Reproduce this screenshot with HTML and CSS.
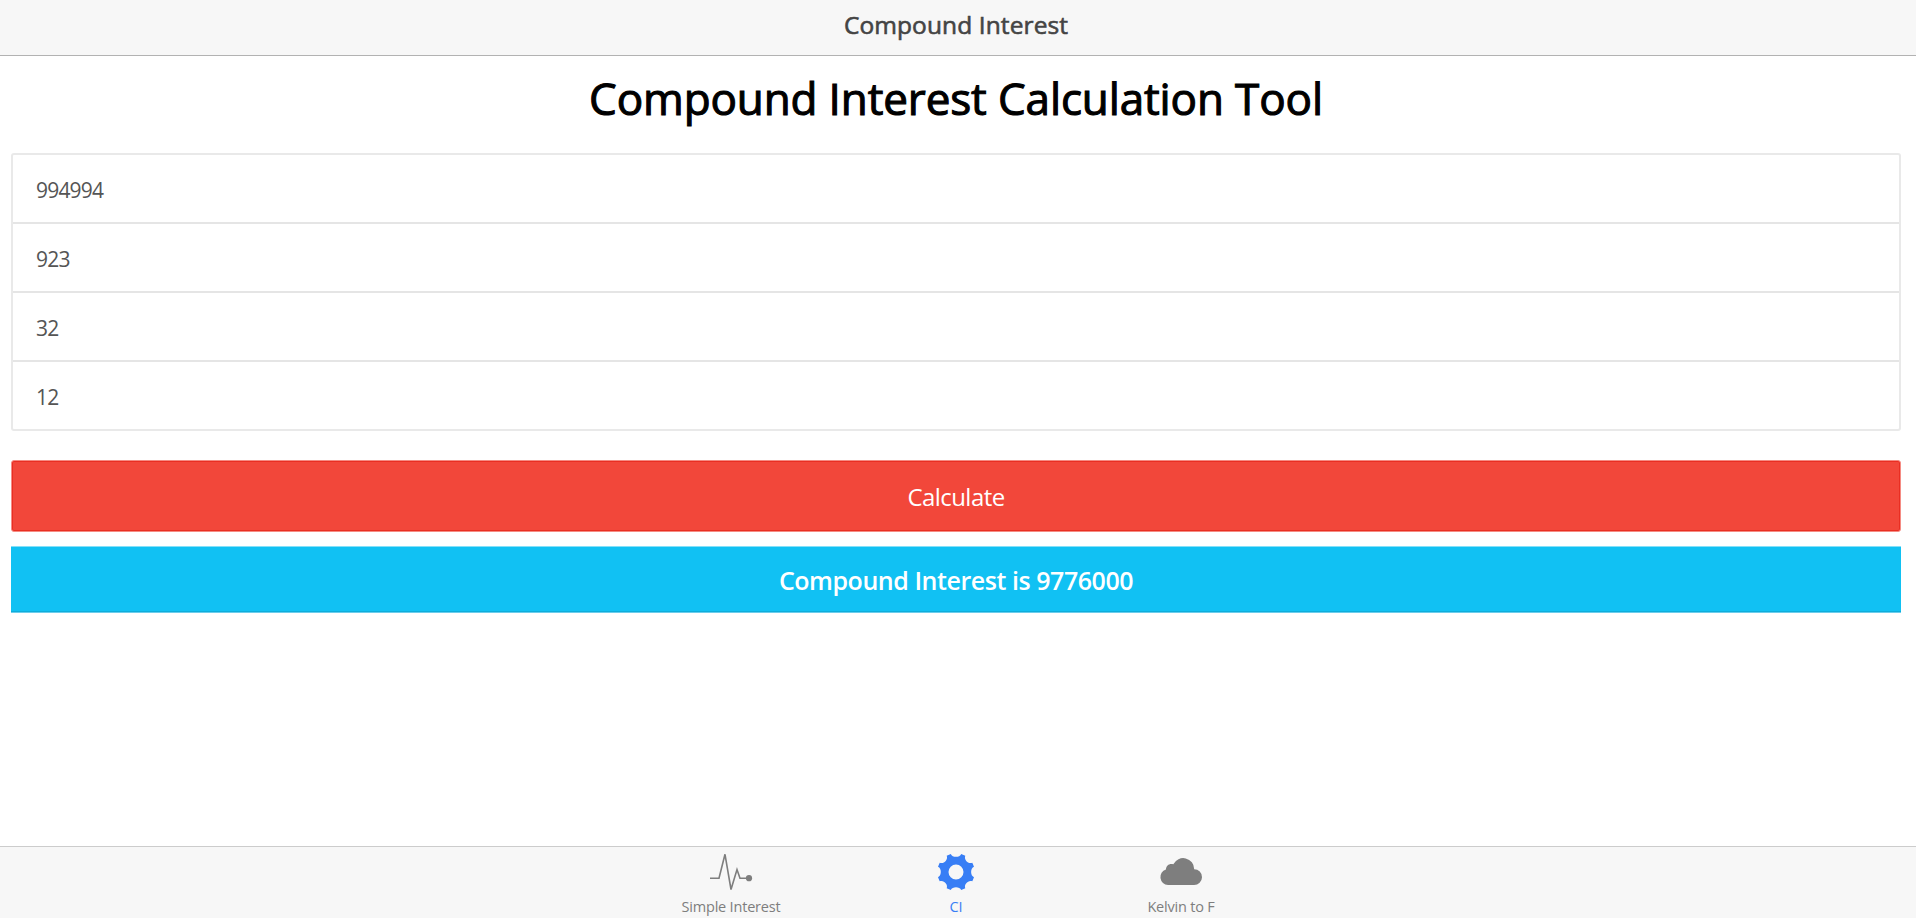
FILE: index.html
```html
<!DOCTYPE html>
<html lang="en">
<head>
<meta charset="utf-8">
<title>Compound Interest</title>
<link rel="stylesheet" href="styles.css">
</head>
<body>
<header class="bar"><span class="bar-title">Compound Interest</span></header>
<main class="content">
  <h1 class="heading">Compound Interest Calculation Tool</h1>
  <div class="list">
    <div class="item"><span>994994</span></div>
    <div class="item"><span>923</span></div>
    <div class="item"><span>32</span></div>
    <div class="item"><span>12</span></div>
  </div>
  <button class="button">Calculate</button>
  <div class="result">Compound Interest is 9776000</div>
</main>
<nav class="tabs">
  <a class="tab">
    <svg class="icon" viewBox="0 0 44 40"><path d="M1 25.2H10L16 1.3L22 36.5L28 16.5L31 25.2H40" fill="none" stroke="currentColor" stroke-width="1.6"/><circle cx="40" cy="25.2" r="3.1" fill="currentColor"/></svg>
    <span class="label">Simple Interest</span>
  </a>
  <a class="tab active">
    <svg class="icon" viewBox="-22 -19 44 40"><path fill="currentColor" fill-rule="evenodd" d="M-5.2-18C-3.9-14.2 3.9-14.2 5.2-18L9.3-16.3C7.6-12.4 12.4-7.6 16.3-9.3L18-5.2C14.2-3.8 14.2 3.8 18 5.2L16.3 9.3C12.4 7.6 7.6 12.4 9.3 16.3L5.2 18C3.8 14.2-3.8 14.2-5.2 18L-9.3 16.3C-7.6 12.4-12.4 7.6-16.3 9.3L-18 5.2C-14.2 3.8-14.2-3.8-18-5.2L-16.3-9.3C-12.4-7.6-7.6-12.4-9.3-16.3ZM0-7.5A7.5 7.5 0 1 0 0 7.5A7.5 7.5 0 1 0 0-7.5Z"/></svg>
    <span class="label">CI</span>
  </a>
  <a class="tab">
    <svg class="icon" viewBox="0 0 44 40"><path fill="currentColor" d="M9 32A8 8 0 0 1 6.9 16.4C7.2 12.4 10.4 10.2 14.3 11.3A11 11 0 0 1 35.2 16.2A7.9 7.9 0 0 1 35 32Z"/></svg>
    <span class="label">Kelvin to F</span>
  </a>
</nav>
</body>
</html>
```
FILE: styles.css
```css
* { box-sizing: border-box; }
body {
  margin: 0;
  height: 918px;
  overflow: hidden;
  display: flex;
  flex-direction: column;
  background: #fff;
  font-family: "Segoe UI", "Open Sans", "Noto Sans", sans-serif;
}
.bar {
  height: 56px;
  padding-right: 4px;
  background: #f7f7f7;
  border-bottom: 1px solid #b2b2b2;
  text-align: center;
  line-height: 49px;
  font-size: 24.5px;
  letter-spacing: 0.1px;
  -webkit-text-stroke: 0.6px #444;
  color: #444;
}
.content { flex: 1; padding: 0 15px 0 11px; }
.heading {
  margin: 0;
  height: 97px;
  line-height: 84px;
  text-align: center;
  font-size: 44px;
  font-weight: 400;
  letter-spacing: -0.12px;
  -webkit-text-stroke: 1.1px #000;
  color: #000;
}
.list { height: 278px; border: 2px solid #e9e9e9; border-radius: 3px; }
.item {
  height: 69px;
  padding-left: 23px;
  line-height: 70px;
  font-size: 21px;
  letter-spacing: -0.8px;
  color: #555;
  border-bottom: 2px solid #e5e5e5;
}
.item:last-child { border-bottom: 0; }
.button {
  display: block;
  width: 100%;
  height: 72px;
  margin: 29px 0 14px;
  padding: 2px 0 0;
  background: #f2473a;
  border: 1px solid #f58c84;
  border-radius: 3px;
  box-shadow: inset 0 0 0 1px #e92e22;
  font: 400 24px/68px "Segoe UI", "Open Sans", "Noto Sans", sans-serif;
  letter-spacing: -0.55px;
  color: #fff;
}
.result {
  height: 67px;
  background: #11c1f3;
  border-top: 1px solid #84dff8;
  border-bottom: 1px solid #6ccdec;
  box-shadow: inset 0 -1px #0fadda;
  text-align: center;
  line-height: 67px;
  font-size: 25px;
  font-weight: 600;
  letter-spacing: -0.45px;
  color: #fff;
}
.tabs {
  height: 72px;
  padding-right: 4px;
  display: flex;
  justify-content: center;
  background: #f7f7f7;
  border-top: 1px solid #ccc;
  color: #7e7e7e;
}
.tab { width: 225px; display: flex; flex-direction: column; align-items: center; padding-top: 6px; }
.active { color: #387ef5; }
.icon { width: 44px; height: 40px; display: block; }
.label { line-height: 20px; margin-top: 4px; font-size: 14.5px; letter-spacing: -0.2px; white-space: nowrap; }
```
